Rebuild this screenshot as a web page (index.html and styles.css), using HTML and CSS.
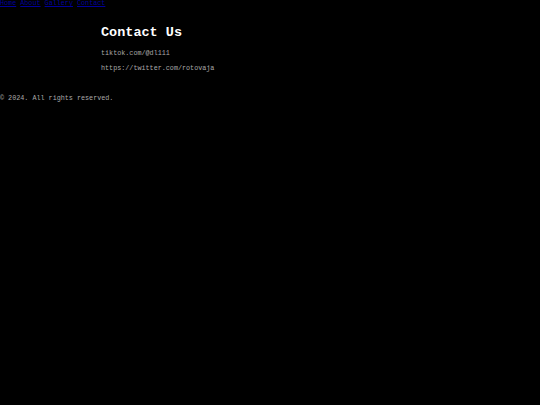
FILE: index.html
```html
<!DOCTYPE html>
<html>
<head>
<meta charset="utf-8">
<link rel="stylesheet" href="styles.css">
</head>
<body>
<nav class="nav">
  <a href="#">Home</a>
  <a href="#">About</a>
  <a href="#">Gallery</a>
  <a href="#">Contact</a>
</nav>
<main class="main">
  <h1 class="title">Contact Us</h1>
  <p class="line">tiktok.com/@dl111</p>
  <p class="line">https://twitter.com/rotovaja</p>
</main>
<footer class="footer">© 2024. All rights reserved.</footer>
</body>
</html>
```
FILE: styles.css
```css
html, body {
  margin: 0;
  padding: 0;
  background: #000;
  color: #aaa;
  font-family: "Courier New", Courier, "Liberation Mono", monospace;
  font-size: 6.75px;
  line-height: 1.15;
}
.nav a {
  color: #00009a;
}
.main {
  padding: 17px 0 0 101px;
}
.title {
  margin: 0 0 10px;
  font-size: 13.5px;
  font-weight: bold;
  color: #fff;
}
.line {
  margin: 0 0 7px;
}
.footer {
  margin-top: 22px;
}
```
